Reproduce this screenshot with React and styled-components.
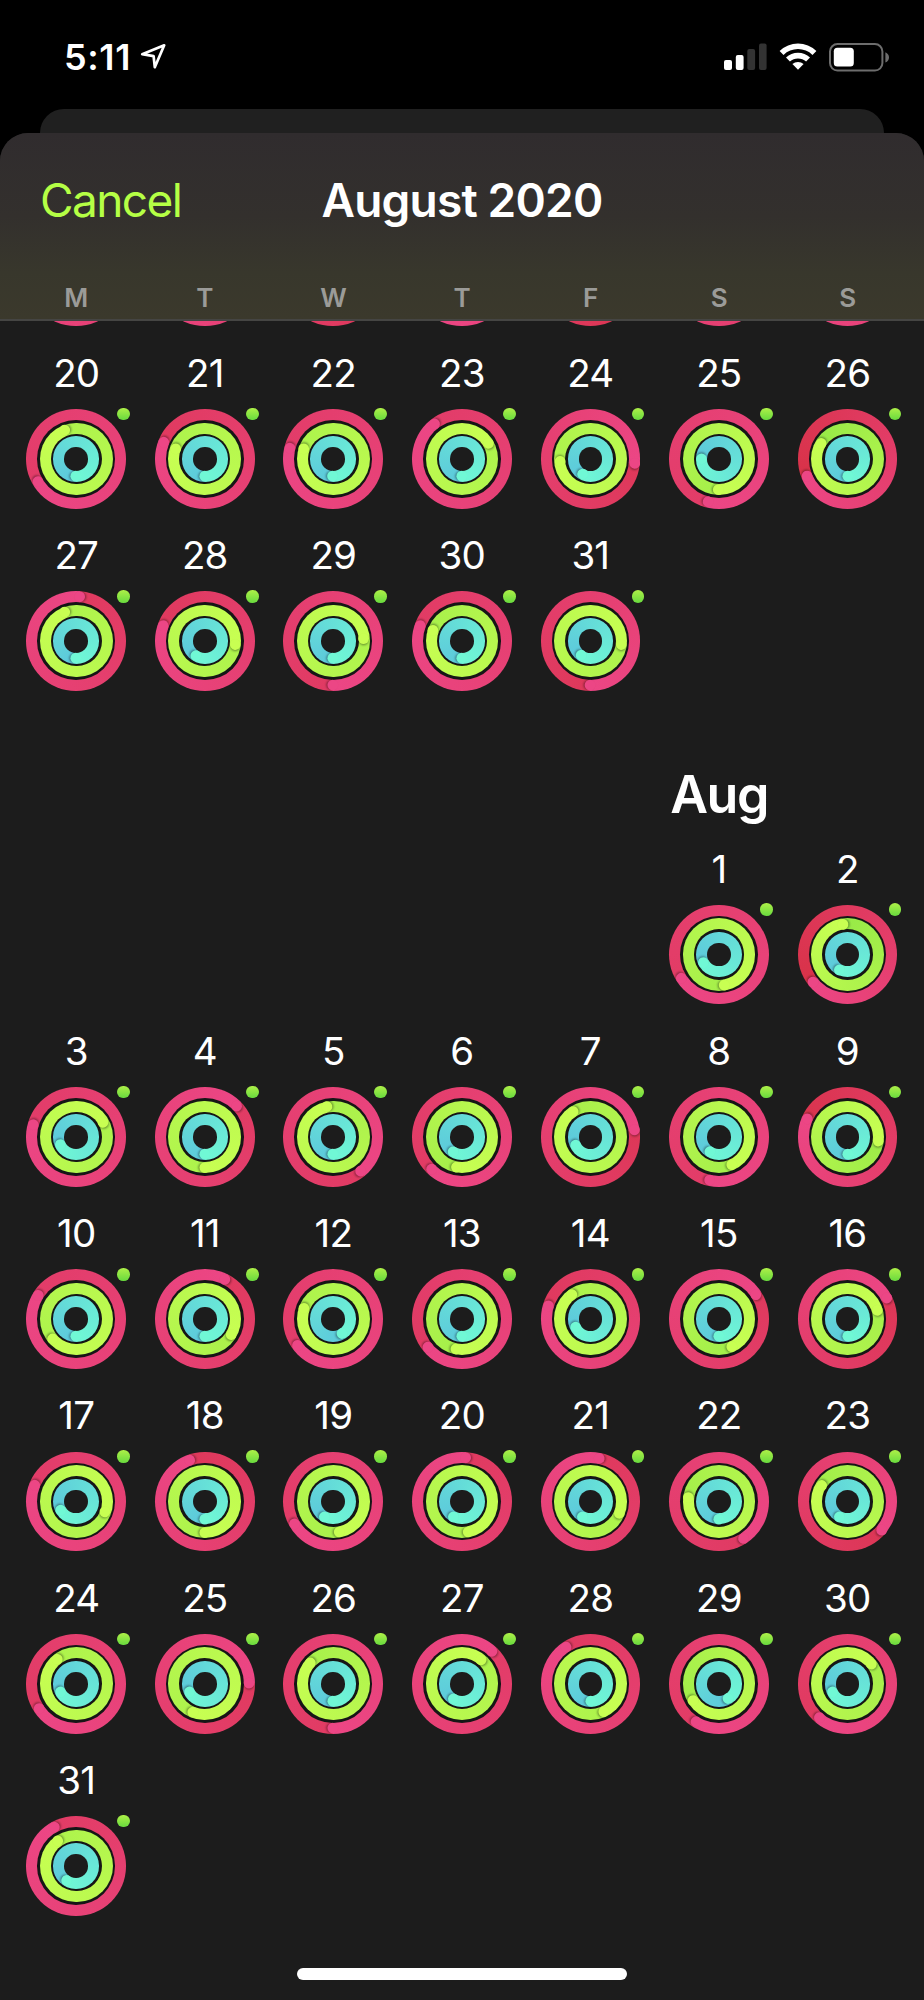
import React from 'react'
import styled, { createGlobalStyle } from 'styled-components'

const WEEKDAYS = ['M', 'T', 'W', 'T', 'F', 'S', 'S']

// where each ring ends, in degrees clockwise from the top: [move, exercise, stand]
// tails: how far along its gradient the move / exercise ring already is where it starts
const HIDDEN_WEEK = [
    { ends: [340, 300, 180] },
    { ends: [330, 300, 180] },
    { ends: [120, 300, 180], tails: [0.3, 0.5] },
    { ends: [230, 300, 180] },
    { ends: [110, 300, 180], tails: [0.1, 0.5] },
    { ends: [60, 300, 180] },
    { ends: [300, 300, 180] },
]

const JULY = [
    { day: 20, ends: [239, 339, 180] },
    { day: 21, ends: [292, 289, 180], tails: [0.38, 0.5] },
    { day: 22, ends: [284, 289, 181] },
    { day: 23, ends: [322, 60, 180] },
    { day: 24, ends: [96, 265, 208], tails: [0.28, 0.5] },
    { day: 25, ends: [194, 181, 270], tails: [0.5, 0.35] },
    { day: 26, ends: [247, 300, 180], tails: [0, 0.1] },
    { day: 27, ends: [5, 339, 180], tails: [0.38, 0.5] },
    { day: 28, ends: [290, 97, 211], tails: [0.35, 0.5] },
    { day: 29, ends: [180, 86, 180], tails: [0.42, 0.5] },
    { day: 30, ends: [290, 290, 180], tails: [0.45, 0.4] },
    { day: 31, ends: [181, 97, 214], tails: [0.3, 0.5] },
]

const AUGUST = [
    { day: 1, ends: [238, 170, 243], tails: [0.48, 0.35] },
    { day: 2, ends: [232, 351, 209], tails: [0, 0.1] },
    { day: 3, ends: [286, 62, 243] },
    { day: 4, ends: [46, 180, 180], tails: [0.45, 0.5] },
    { day: 5, ends: [141, 349, 180], tails: [0.42, 0.4] },
    { day: 6, ends: [223, 190, 210], tails: [0.45, 0.35] },
    { day: 7, ends: [81, 325, 241], tails: [0.25, 0.4] },
    { day: 8, ends: [192, 155, 211], tails: [0.5, 0.35] },
    { day: 9, ends: [294, 98, 180], tails: [0.1, 0.2] },
    { day: 10, ends: [302, 229, 180] },
    { day: 11, ends: [27, 121, 180], tails: [0.38, 0.45] },
    { day: 12, ends: [233, 290, 148] },
    { day: 13, ends: [230, 191, 180], tails: [0.42, 0.35] },
    { day: 14, ends: [287, 322, 241], tails: [0.35, 0.5] },
    { day: 15, ends: [57, 155, 180], tails: [0.35, 0.3] },
    { day: 16, ends: [62, 74, 180], tails: [0.22, 0.35] },
    { day: 17, ends: [292, 109, 241] },
    { day: 18, ends: [340, 180, 180], tails: [0.3, 0.5] },
    { day: 19, ends: [240, 168, 209], tails: [0.5, 0.4] },
    { day: 20, ends: [5, 168, 209], tails: [0.4, 0.5] },
    { day: 21, ends: [11, 112, 209], tails: [0.35, 0.5] },
    { day: 22, ends: [146, 278, 180], tails: [0.42, 0.35] },
    { day: 23, ends: [130, 302, 209], tails: [0.22, 0.3] },
    { day: 24, ends: [236, 323, 242], tails: [0.45, 0.5] },
    { day: 25, ends: [89, 203, 242], tails: [0.38, 0.5] },
    { day: 26, ends: [180, 313, 180], tails: [0.45, 0.4] },
    { day: 27, ends: [43, 39, 209], tails: [0.5, 0.5] },
    { day: 28, ends: [326, 155, 180], tails: [0.4, 0.5] },
    { day: 29, ends: [211, 237, 148], tails: [0.48, 0.3] },
    { day: 30, ends: [220, 50, 242], tails: [0.38, 0.35] },
    { day: 31, ends: [331, 324, 212], tails: [0.48, 0.5] },
]

const MOVE = { from: [216, 50, 72], to: [236, 70, 133] }
const EXERCISE = { from: [146, 230, 70], to: [200, 255, 82] }
const STAND = { from: [92, 200, 219], to: [112, 248, 213] }

function mix({ from, to }, amount) {
    const channels = from.map((c, i) => Math.round(c + (to[i] - c) * amount))
    return `rgb(${channels.join(',')})`
}

function Cap({ end, radius, color }) {
    return (
        <g transform={`rotate(${end} 50 50)`}>
            <circle cx={51.6} cy={50 - radius} r="4.9" fill="#000" opacity="0.42" filter="url(#capShadow)" />
            <circle cx={50} cy={50 - radius} r="5.4" fill={color} />
        </g>
    )
}

function Rings({ ends, tails = [0.52, 0.5] }) {
    const [move, exercise, stand] = ends
    return (
        <RingBox>
            <Disc style={{ backgroundImage: `conic-gradient(from ${move}deg, ${mix(MOVE, tails[0])}, ${mix(MOVE, 1)})` }}>
                <Gap>
                    <Disc style={{ backgroundImage: `conic-gradient(from ${exercise}deg, ${mix(EXERCISE, tails[1])}, ${mix(EXERCISE, 1)})` }}>
                        <Gap>
                            <Disc style={{ backgroundImage: `conic-gradient(from ${stand}deg, ${mix(STAND, 0)}, ${mix(STAND, 1)})` }}>
                                <Hole />
                            </Disc>
                        </Gap>
                    </Disc>
                </Gap>
            </Disc>
            <Caps viewBox="0 0 100 100">
                <Cap end={move} radius={44.4} color={mix(MOVE, 1)} />
                <Cap end={exercise} radius={30.9} color={mix(EXERCISE, 1)} />
                <Cap end={stand} radius={17.4} color={mix(STAND, 1)} />
            </Caps>
        </RingBox>
    )
}

function Month({ days, startColumn }) {
    return (
        <Week>
            {days.map(({ day, ends, tails }, i) => (
                <Day key={day} $column={i === 0 ? startColumn : undefined}>
                    <DayNumber>{day}</DayNumber>
                    <RingHolder>
                        <Rings ends={ends} tails={tails} />
                        <WorkoutDot />
                    </RingHolder>
                </Day>
            ))}
        </Week>
    )
}

function App() {
    return (
        <Screen>
            <GlobalStyle />
            <svg width="0" height="0" style={{ position: 'absolute' }}>
                <filter id="capShadow" x="-50%" y="-50%" width="200%" height="200%">
                    <feGaussianBlur stdDeviation="0.9" />
                </filter>
            </svg>
            <StatusBar>
                <Clock>
                    <Time>5:11</Time>
                    <svg width="28" height="28" viewBox="0 0 28 28">
                        <path d="M3.2 12.2 25.2 3.3 15.8 25.2 14.6 14.2Z" fill="none" stroke="#fff" strokeWidth="2.7" strokeLinejoin="round" />
                    </svg>
                </Clock>
                <Indicators>
                    <svg width="43" height="28" viewBox="0 0 43 28">
                        <rect x="0" y="17" width="8" height="10" rx="2" fill="#fff" />
                        <rect x="11.8" y="12" width="7.8" height="15" rx="2" fill="#fff" />
                        <rect x="23.3" y="6" width="7.8" height="21" rx="2" fill="#333" />
                        <rect x="35" y="0.5" width="7.6" height="26.5" rx="2" fill="#333" />
                    </svg>
                    <svg width="38" height="28" viewBox="0 0 38 28">
                        <path d="M0.6 7.9A26.6 26.6 0 0 1 37.4 7.9L33.5 11.9A21 21 0 0 0 4.5 11.9Z" fill="#fff" />
                        <path d="M7 14.6A17.4 17.4 0 0 1 31 14.6L27.1 18.6A11.8 11.8 0 0 0 10.9 18.6Z" fill="#fff" />
                        <path d="M13.4 21.1A8.2 8.2 0 0 1 24.6 21.1L19 26.8Z" fill="#fff" />
                    </svg>
                    <svg width="61" height="29" viewBox="0 0 61 29">
                        <rect x="1" y="1" width="52.4" height="26.6" rx="7.5" fill="none" stroke="#6d6d6d" strokeWidth="2" />
                        <rect x="4.8" y="4.8" width="20" height="18.6" rx="3.5" fill="#fff" />
                        <path d="M56.4 9.3Q60 11 60 14.4T56.4 19.5Z" fill="#6d6d6d" />
                    </svg>
                </Indicators>
            </StatusBar>
            <BackCard />
            <Sheet>
                <Header>
                    <TitleBar>
                        <Cancel>Cancel</Cancel>
                        <Title>August 2020</Title>
                    </TitleBar>
                    <WeekdayRow>
                        {WEEKDAYS.map((name, i) => (
                            <Weekday key={i}>{name}</Weekday>
                        ))}
                    </WeekdayRow>
                </Header>
                <PeekWeek>
                    {HIDDEN_WEEK.map((rings, i) => (
                        <Rings key={i} {...rings} />
                    ))}
                </PeekWeek>
                <Month days={JULY} startColumn={1} />
                <MonthRow>
                    <MonthName $column={6}>Aug</MonthName>
                </MonthRow>
                <Month days={AUGUST} startColumn={6} />
                <MonthRow>
                    <MonthName $column={2}>Sep</MonthName>
                </MonthRow>
            </Sheet>
            <HomeIndicator />
        </Screen>
    )
}

export default App

const GlobalStyle = createGlobalStyle`
    body {
        margin: 0;
        background: #000;
    }
    * {
        box-sizing: border-box;
    }
`

const Screen = styled.div`
    position: relative;
    display: flex;
    flex-direction: column;
    width: 924px;
    height: 2000px;
    overflow: hidden;
    background: #000;
    color: #fff;
    font-family: Inter, 'Liberation Sans', sans-serif;
`

const StatusBar = styled.div`
    display: flex;
    flex: none;
    align-items: flex-start;
    justify-content: space-between;
    height: 108.5px;
    padding: 42px 34px 0 64px;
`

const Clock = styled.div`
    display: flex;
    gap: 7px;
`

const Time = styled.div`
    width: 68px;
    font-size: 36px;
    font-weight: 600;
    line-height: 30px;
    letter-spacing: 0.6px;
    white-space: nowrap;
`

const Indicators = styled.div`
    display: flex;
    gap: 12px;
    padding-top: 1px;
`

const BackCard = styled.div`
    flex: none;
    height: 24.5px;
    margin: 0 40px;
    border-radius: 24px 24px 0 0;
    background: #202020;
`

const Sheet = styled.div`
    flex: 1;
    min-height: 0;
    overflow: hidden;
    border-radius: 28px 28px 0 0;
    background: #1c1c1c;
`

const Header = styled.div`
    height: 188px;
    border-bottom: 2px solid #454543;
    background: linear-gradient(#302c2e, #33302d 45%, #38372c 75%, #3b392c);
`

const TitleBar = styled.div`
    display: grid;
    grid-template-columns: 1fr auto 1fr;
    align-items: center;
    height: 134px;
    padding: 0 40px;
    font-size: 46px;
    line-height: 56px;
`

const Cancel = styled.div`
    color: #b5ff45;
    letter-spacing: -1.6px;
`

const Title = styled.div`
    font-weight: 600;
    letter-spacing: -0.8px;
`

const WeekdayRow = styled.div`
    display: grid;
    grid-template-columns: repeat(7, 1fr);
    padding: 14px 12px 0;
`

const Weekday = styled.div`
    font-size: 26px;
    font-weight: 600;
    line-height: 34px;
    text-align: center;
    color: #9b9b98;
`

const Week = styled.div`
    display: grid;
    grid-template-columns: repeat(7, 1fr);
    grid-auto-rows: 182.3px;
    padding: 0 12.4px 0 12px;
`

// bottom edge of the week that is scrolled under the header
const PeekWeek = styled(Week)`
    height: 29.9px;
    overflow: hidden;
    justify-items: center;

    > * {
        margin-top: -94.5px;
    }
`

const Day = styled.div`
    display: flex;
    flex-direction: column;
    align-items: center;
    gap: 14.2px;
    grid-column-start: ${({ $column }) => $column || 'auto'};
`

const DayNumber = styled.div`
    font-size: 38.5px;
    line-height: 44px;
    letter-spacing: -0.8px;
`

const RingHolder = styled.div`
    position: relative;
`

const RingBox = styled.div`
    position: relative;
    width: 99.6px;
    height: 99.6px;
`

const Disc = styled.div`
    width: 100%;
    height: 100%;
    padding: 11px;
    border-radius: 50%;
`

const Gap = styled.div`
    width: 100%;
    height: 100%;
    padding: 2.5px;
    border-radius: 50%;
    background: #161616;
`

const Hole = styled.div`
    width: 100%;
    height: 100%;
    border-radius: 50%;
    background: #1c1c1c;
`

const Caps = styled.svg`
    position: absolute;
    inset: 0;
    width: 100%;
    height: 100%;
`

const WorkoutDot = styled.div`
    position: absolute;
    top: -1.4px;
    right: -4px;
    width: 12.6px;
    height: 12.6px;
    border-radius: 50%;
    background: linear-gradient(#aef048, #68da3e);
`

const MonthRow = styled.div`
    display: grid;
    grid-template-columns: repeat(7, 1fr);
    height: 131.1px;
    padding: 49.8px 12px 0;
`

const MonthName = styled.div`
    grid-column-start: ${({ $column }) => $column};
    font-size: 52px;
    font-weight: 600;
    line-height: 60px;
    text-align: center;
    letter-spacing: -1.4px;
`

const HomeIndicator = styled.div`
    position: absolute;
    left: 297px;
    bottom: 20px;
    width: 330px;
    height: 12px;
    border-radius: 6px;
    background: #fff;
`
